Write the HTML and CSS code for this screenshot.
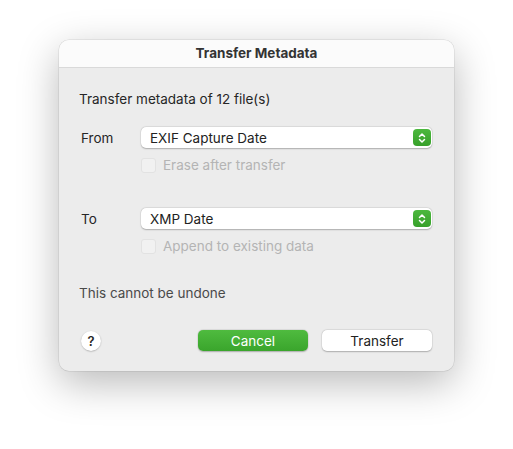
FILE: index.html
```html
<!DOCTYPE html>
<html>
<head>
<meta charset="utf-8">
<link rel="stylesheet" href="styles.css">
</head>
<body>
<div class="dialog">
  <div class="titlebar">Transfer Metadata</div>
  <div class="content">
    <div class="intro">Transfer metadata of 12 file(s)</div>
    <div class="row">
      <div class="label">From</div>
      <div class="select"><span class="value">EXIF Capture Date</span><span class="stepper"><svg width="10" height="12" viewBox="0 0 10 12"><path d="M2.5 4.5 L5 2 L7.5 4.5 M2.5 7.5 L5 10 L7.5 7.5" fill="none" stroke="#fff" stroke-width="1.5" stroke-linecap="round" stroke-linejoin="round"/></svg></span></div>
    </div>
    <div class="check"><span class="box"></span><span>Erase after transfer</span></div>
    <div class="row row-to">
      <div class="label">To</div>
      <div class="select"><span class="value">XMP Date</span><span class="stepper"><svg width="10" height="12" viewBox="0 0 10 12"><path d="M2.5 4.5 L5 2 L7.5 4.5 M2.5 7.5 L5 10 L7.5 7.5" fill="none" stroke="#fff" stroke-width="1.5" stroke-linecap="round" stroke-linejoin="round"/></svg></span></div>
    </div>
    <div class="check"><span class="box"></span><span>Append to existing data</span></div>
    <div class="warning">This cannot be undone</div>
    <div class="footer">
      <div class="help">?</div>
      <div class="buttons">
        <div class="btn btn-primary">Cancel</div>
        <div class="btn">Transfer</div>
      </div>
    </div>
  </div>
</div>
</body>
</html>
```
FILE: styles.css
```css
html, body {
  margin: 0;
  padding: 0;
  background: #ffffff;
}
body {
  font-family: Inter, "Liberation Sans", sans-serif;
  font-size: 13.5px;
  color: #262626;
  padding: 40px 0 0 59px;
  height: 449px;
  box-sizing: border-box;
}
.dialog {
  width: 395px;
  height: 331px;
  border-radius: 10px;
  background: #ececec;
  box-shadow: 0 12px 40px rgba(0,0,0,0.28), 0 0 0 0.5px rgba(0,0,0,0.12);
  overflow: hidden;
  display: flex;
  flex-direction: column;
}
.titlebar {
  height: 27px;
  background: #fbfbfb;
  border-bottom: 1px solid #d9d9d9;
  text-align: center;
  font-weight: 700;
  font-size: 13.5px;
  line-height: 27px;
  color: #333;
}
.content {
  padding: 22px 22px 0 20px;
  display: flex;
  flex-direction: column;
}
.intro {
  line-height: 18px;
  margin-bottom: 19px;
}
.row {
  display: flex;
  align-items: center;
  height: 21px;
}
.row-to {
  margin-top: 36px;
}
.label {
  width: 62px;
  padding-left: 2px;
  box-sizing: border-box;
}
.select {
  flex: 1;
  height: 21px;
  background: #fff;
  border-radius: 5px;
  box-shadow: 0 0.5px 1.5px rgba(0,0,0,0.25), 0 0 0 0.5px rgba(0,0,0,0.06);
  display: flex;
  align-items: center;
  justify-content: space-between;
  padding: 0 1px 0 9px;
}
.value {
  color: #222;
}
.stepper {
  width: 18px;
  height: 17px;
  border-radius: 4px;
  background: linear-gradient(#4cb83e, #37a02a);
  display: flex;
  align-items: center;
  justify-content: center;
}
.check {
  display: flex;
  align-items: center;
  margin: 10px 0 0 62px;
  color: #b4b4b4;
  height: 14px;
}
.box {
  width: 13px;
  height: 13px;
  border-radius: 3px;
  background: #f1f1f1;
  border: 0.5px solid #e2e2e2;
  margin-right: 7px;
}
.warning {
  margin-top: 31px;
  color: #4a4a4a;
  line-height: 18px;
}
.footer {
  margin-top: 28px;
  display: flex;
  align-items: center;
  justify-content: space-between;
}
.help {
  width: 20px;
  height: 20px;
  border-radius: 50%;
  background: #fff;
  box-shadow: 0 0.5px 1.5px rgba(0,0,0,0.3);
  display: flex;
  align-items: center;
  justify-content: center;
  font-weight: 600;
  font-size: 13px;
  margin-left: 2px;
}
.buttons {
  display: flex;
  gap: 14px;
}
.btn {
  width: 110px;
  height: 21px;
  border-radius: 5px;
  background: #fff;
  box-shadow: 0 0.5px 1.5px rgba(0,0,0,0.25), 0 0 0 0.5px rgba(0,0,0,0.06);
  display: flex;
  align-items: center;
  justify-content: center;
  color: #222;
}
.btn-primary {
  background: linear-gradient(#4fbb3f, #3aa52c);
  color: #fff;
}
```
